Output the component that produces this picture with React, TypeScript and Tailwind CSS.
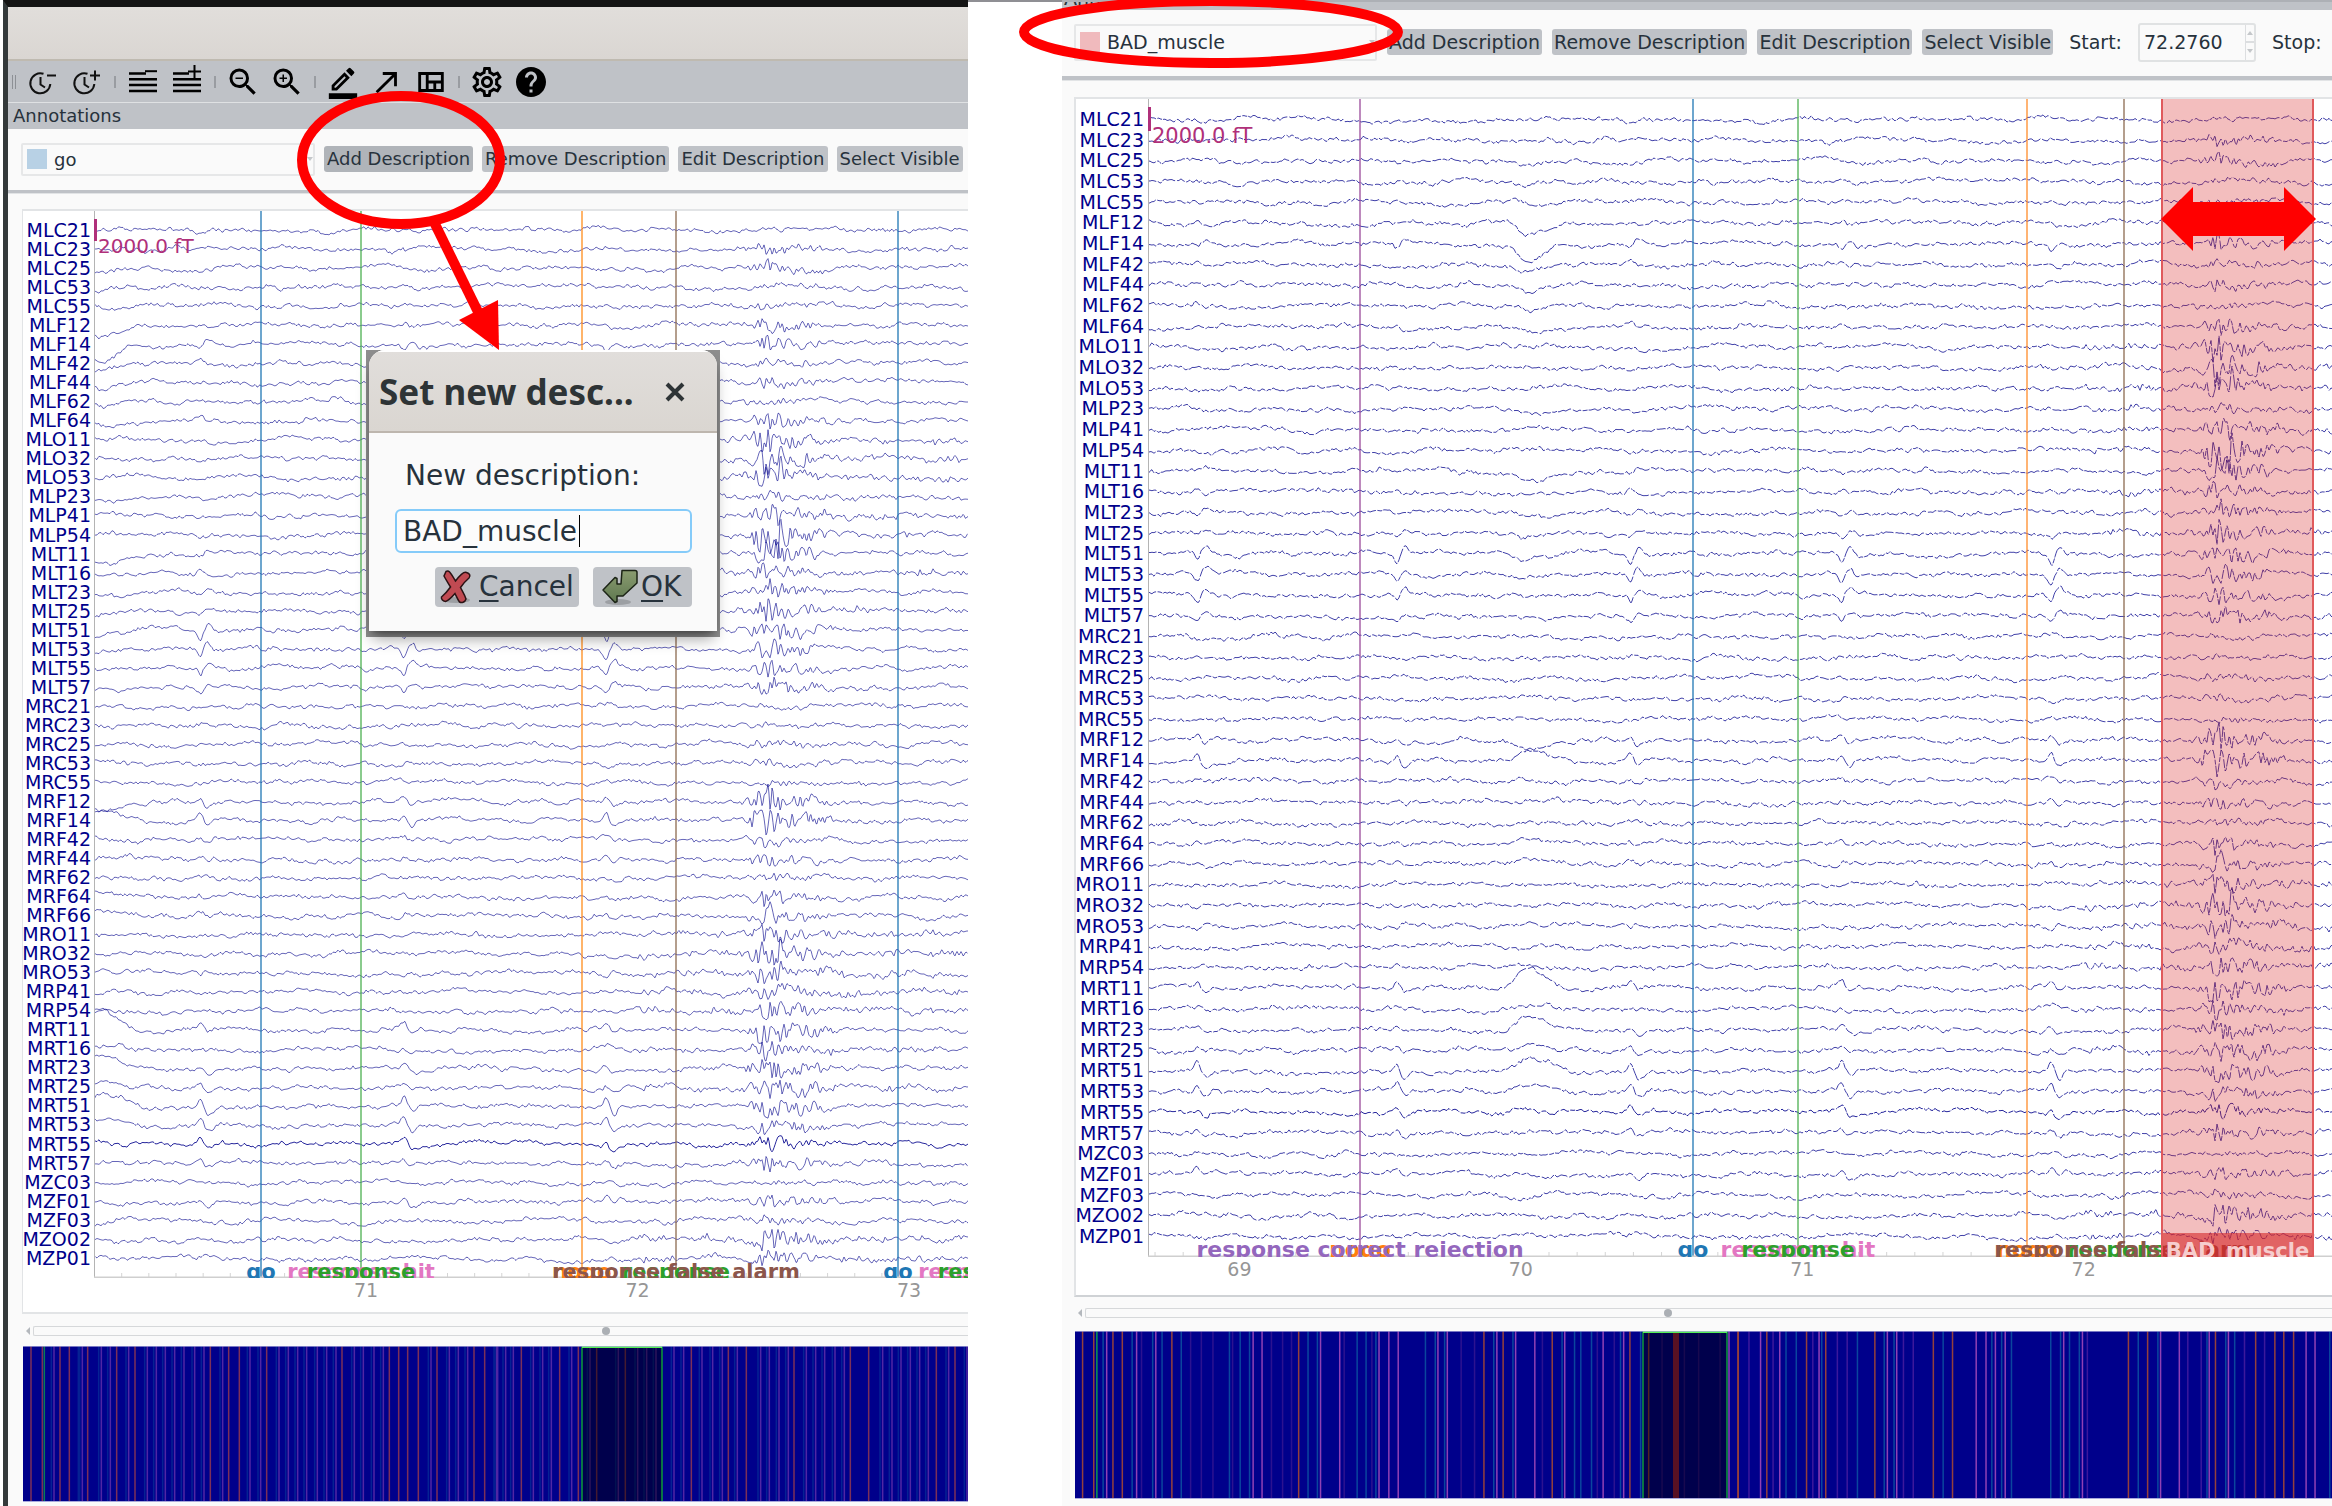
import React, { useMemo } from 'react';
import {
  MdZoomOut,
  MdZoomIn,
  MdOutlineBorderColor,
  MdCallMade,
  MdOutlineViewQuilt,
  MdOutlineSettings,
  MdHelp,
} from 'react-icons/md';

interface Channel {
  name: string;
  burst: number; // muscle artifact amplitude
  blink: number; // eye blink deflection
  beat: number; // heart beat deflection
  dark?: boolean;
}

const ch = (name: string, burst: number, blink = 0, beat = 0, dark = false): Channel => ({
  name,
  burst,
  blink,
  beat,
  dark,
});

const CHANNELS: Channel[] = [
  ch('MLC21', 1, 3), ch('MLC23', 5, 3), ch('MLC25', 5, 4), ch('MLC53', 2, 3), ch('MLC55', 3, 2),
  ch('MLF12', 7, 13, -2), ch('MLF14', 6, 17, 4), ch('MLF42', 3, 6, -2), ch('MLF44', 5, 8, -1),
  ch('MLF62', 3, 5, -1), ch('MLF64', 7, 5, -2), ch('MLO11', 10), ch('MLO32', 11), ch('MLO53', 9),
  ch('MLP23', 3, 3), ch('MLP41', 9), ch('MLP54', 13), ch('MLT11', 9, 10, 2), ch('MLT16', 8, 2, -3),
  ch('MLT23', 8, 5, 3), ch('MLT25', 9, 2, 3), ch('MLT51', 9, 4, 9), ch('MLT53', 7, 2, 8),
  ch('MLT55', 7, 1, 7), ch('MLT57', 9, 1, 5), ch('MRC21', 2, 1), ch('MRC23', 2), ch('MRC25', 4),
  ch('MRC53', 2), ch('MRC55', 2), ch('MRF12', 11, 6, -5), ch('MRF14', 14, -8, -7),
  ch('MRF42', 4, 0, -2), ch('MRF44', 6, -2, -3), ch('MRF62', 4, 0), ch('MRF64', 7, -4, -2),
  ch('MRF66', 8, -4, -2), ch('MRO11', 8), ch('MRO32', 12), ch('MRO53', 10, 0, 3), ch('MRP41', 6),
  ch('MRP54', 8, -3), ch('MRT11', 12, -21, -5), ch('MRT16', 8, -4, -2), ch('MRT23', 11, -14, -4),
  ch('MRT25', 9, -6, -4), ch('MRT51', 9, -12, -9), ch('MRT53', 8, -7, -7),
  ch('MRT55', 6, -3, -5, true), ch('MRT57', 8, -2, -4), ch('MZC03', 2), ch('MZF01', 9, 1, -4),
  ch('MZF03', 5, 2), ch('MZO02', 9), ch('MZP01', 7),
];

const BEATS = [68.85, 69.56, 70.39, 71.14, 71.885];

function hash(n: number, seed: number) {
  let h = Math.imul(n ^ (seed * 2654435761), 1597334677);
  h ^= h >>> 15;
  h = Math.imul(h, 2246822519);
  h ^= h >>> 13;
  return ((h >>> 0) / 4294967295) * 2 - 1;
}

function noise(x: number, seed: number) {
  const i = Math.floor(x);
  const f = x - i;
  return hash(i, seed) * (1 - f) + hash(i + 1, seed) * f;
}

const gauss = (t: number, mean: number, sd: number) => Math.exp(-((t - mean) ** 2) / (2 * sd * sd));

// Deflection in pixels (downwards) of one channel at time t
function signal(c: Channel, index: number, t: number) {
  let y =
    2.4 * noise(t * 10, index * 7 + 1) +
    2 * noise(t * 32, index * 7 + 2) +
    1.8 * noise(t * 125, index * 7 + 3);
  if (t > 72 && /O|P|T16|T25/.test(c.name)) y += 2.2 * noise(t * 125, index * 7 + 5);
  y += c.burst * 1.4 * noise(t * 135, index * 7 + 4) * (gauss(t, 72.48, 0.045) + 0.5 * gauss(t, 72.61, 0.07));
  if (/O32|O53|P54/.test(c.name)) y += c.burst * 1.3 * (gauss(t, 72.515, 0.005) - gauss(t, 72.526, 0.005));
  const blinkWidth = t < 70.02 ? 0.03 : 0.065;
  y += c.blink * gauss(t, 70.02, blinkWidth);
  BEATS.forEach((b) => {
    y += c.beat * (gauss(t, b, 0.009) - 0.8 * gauss(t, b + 0.03, 0.012));
  });
  return y;
}

interface EventMark {
  x: number;
  color: string;
}

interface EventLabel {
  x: number;
  text: string;
  className: string;
}

interface PlotProps {
  width: number;
  height: number;
  t0: number;
  pxPerSec: number;
  seconds: number[];
  marks: EventMark[];
  dashed?: boolean;
}

const Traces: React.FC<PlotProps> = ({ width, height, t0, pxPerSec, marks, dashed, seconds }) => {
  const paths = useMemo(() => {
    const pitch = height / (CHANNELS.length + 1);
    return CHANNELS.map((c, i) => {
      let d = '';
      for (let x = 0; x <= width; x += 1) {
        const y = pitch * (i + 1) + signal(c, i, t0 + x / pxPerSec);
        d += `${x === 0 ? 'M' : 'L'}${x} ${y.toFixed(1)}`;
      }
      return d;
    });
  }, [width, height, t0, pxPerSec]);

  const minor: number[] = [];
  for (let s = seconds[0] - 1; s < seconds[seconds.length - 1] + 1; s += 0.1) {
    minor.push((s - t0) * pxPerSec);
  }

  return (
    <svg
      className="block h-full w-full"
      viewBox={`0 0 ${width} ${height}`}
      preserveAspectRatio="none"
      fill="none"
    >
      {paths.map((d, i) => (
        <path
          key={CHANNELS[i].name}
          d={d}
          stroke="#00008b"
          strokeWidth="1"
          strokeOpacity={CHANNELS[i].dark ? 0.85 : dashed ? 0.75 : 0.6}
          strokeDasharray={dashed ? '9 1.5 5 1 14 2' : undefined}
        />
      ))}
      {marks.map((m) => (
        <line key={m.x} x1={m.x} x2={m.x} y1="0" y2={height} stroke={m.color} strokeWidth="2" strokeOpacity="0.65" />
      ))}
      {minor.map((x) => (
        <line key={x} x1={x} x2={x} y1={height - 5} y2={height} stroke="#d4d4d4" />
      ))}
      <line x1="0.5" x2="0.5" y1="0" y2={height} stroke="#b4b4b4" />
      <line x1="0" x2={width} y1={height - 0.5} y2={height - 0.5} stroke="#cfcfcf" strokeWidth="2" />
    </svg>
  );
};

const EventLabels: React.FC<{ labels: EventLabel[]; width: number; size: string }> = ({ labels, width, size }) => (
  <>
    {labels.map((l, i) => (
      <span
        key={i}
        className={`absolute -bottom-1.5 -translate-x-1/2 font-bold whitespace-nowrap ${size} ${l.className}`}
        style={{ left: `${(l.x / width) * 100}%` }}
      >
        {l.text}
      </span>
    ))}
  </>
);

const TickLabels: React.FC<{ seconds: number[]; t0: number; pxPerSec: number; width: number }> = ({
  seconds,
  t0,
  pxPerSec,
  width,
}) => (
  <>
    {seconds.map((s) => (
      <span
        key={s}
        className="absolute top-0 -translate-x-1/2 text-[19px] leading-6 text-[#969696]"
        style={{ left: `${(((s - t0) * pxPerSec) / width) * 100}%` }}
      >
        {s}
      </span>
    ))}
  </>
);

const ChannelLabels: React.FC = () => (
  <>
    {CHANNELS.map((c) => (
      <li key={c.name} className="flex min-h-0 flex-1 items-center justify-end leading-none">
        {c.name}
      </li>
    ))}
  </>
);

type Stripe = [number, string];
const mapStripes = (xs: number[], color: string, toX: (x: number) => number): Stripe[] =>
  xs.map((x) => [toX(x), color]);

const leftA = (x: number) => x / 3 - 3;
const leftB = (x: number) => x / 3 + 467;
const PURPLE_A = [102, 187, 244, 271, 326, 382, 409, 436, 464, 492, 524, 552, 608, 690, 722, 777, 805, 833, 860, 892, 920, 948, 1003, 1030, 1062, 1090, 1233, 1288, 1315, 1343, 1433];
const PURPLE_B = [20, 47, 70, 130, 158, 184, 245, 300, 385, 443, 470, 498, 552, 581, 636, 668, 697, 742, 812, 838, 867, 895, 949, 977, 1004, 1035, 1063, 1178, 1206, 1233, 1261, 1289, 1315, 1376, 1431];
const LEFT_STRIPES: Stripe[] = [
  ...mapStripes(PURPLE_A, '#052294', (x) => leftA(x - 8)),
  ...mapStripes(PURPLE_B, '#052294', (x) => leftB(x - 8)),
  ...mapStripes([175], '#052294', leftA),
  ...mapStripes(PURPLE_A, '#5026a4', leftA),
  ...mapStripes(PURPLE_B, '#5026a4', leftB),
  ...mapStripes([33, 67, 120, 148, 203, 290, 345, 571, 626, 658, 740, 966, 1108, 1136, 1163, 1195, 1251, 1362, 1394], '#7c3058', leftA),
  ...mapStripes([94, 209, 265, 320, 406, 604, 715, 769, 912, 1081, 1136, 1339, 1395], '#7c3058', leftB),
  ...mapStripes([73], '#0a7a58', leftA),
];

const rightA = (x: number) => (x - 35) / 2.24;
const rightB = (x: number) => x / 2.24 + 557;
const RIGHT_STRIPES: Stripe[] = [
  ...mapStripes([184, 294, 318, 344, 388, 475, 500, 520, 638, 700, 900, 930, 1082, 1205, 1243, 1350, 1400, 1432, 1480], '#2c1290', rightA),
  ...mapStripes([262, 316, 405, 460, 482, 608, 630, 1020, 1245, 1275, 1372, 1417], '#3c189c', rightB),
  ...mapStripes([98, 163, 209, 230, 273, 381, 405, 426, 557, 578, 667, 687, 709, 820, 842, 863, 973, 1016, 1126, 1154, 1168, 1192, 1257, 1302], '#0a469e', rightA),
  ...mapStripes([345, 368, 425, 505, 565, 587, 697, 806, 828, 850, 938, 960, 980, 1002, 1134, 1178, 1288, 1330, 1350, 1563], '#0a469e', rightB),
  ...mapStripes([106, 173, 216, 434, 454, 585, 628, 716, 738, 759, 848, 869, 980, 1022, 1065, 1132, 1218, 1264, 1500], '#9040b4', rightA),
  ...mapStripes([288, 331, 419, 572, 593, 771, 793, 814, 836, 967, 1009, 1184, 1226, 1293, 1336, 1510, 1530], '#9040b4', rightB),
  ...mapStripes([52, 77, 120, 141, 252, 536, 951, 994, 1104, 1278, 1320, 1520], '#94403c', rightA),
  ...mapStripes([238, 302, 391, 434, 544, 675, 718, 1112, 1155, 1307, 1397, 1440, 1460, 1482], '#94403c', rightB),
  ...mapStripes([84], '#0a9a50', rightA),
];

interface OverviewProps {
  width: number;
  height: number;
  stripes: Stripe[];
  view: [number, number];
  bad?: [number, number];
}

const Overview: React.FC<OverviewProps> = ({ width, height, stripes, view, bad }) => (
  <svg
    className="block h-full w-full"
    viewBox={`0 0 ${width} ${height}`}
    preserveAspectRatio="none"
  >
    <rect width={width} height={height} fill="#00008b" />
    {stripes.map(([x, color], i) => (
      <rect key={i} x={x - 0.75} y="0" width="1.5" height={height} fill={color} />
    ))}
    {bad && <rect x={bad[0]} y="0" width={bad[1] - bad[0]} height={height} fill="#a02040" />}
    <rect x={view[0]} y="0" width={view[1] - view[0]} height={height} fill="#000" fillOpacity="0.45" />
    <path d={`M${view[0]} ${height}V1H${view[1]}V${height}`} fill="none" stroke="#0c9a3a" strokeWidth="1.5" />
    <path d={`M${view[0]} 1H${view[1]}`} stroke="#55f055" strokeWidth="2" />
    <rect x="0" y="0" width={width} height="1" fill="#a8a8dc" fillOpacity="0.7" />
    <rect x="0" y={height - 1} width={width} height="1" fill="#a8a8dc" />
  </svg>
);

const ToolButton: React.FC<{ label: string; children: React.ReactNode }> = ({ label, children }) => (
  <button type="button" aria-label={label} className="flex size-9 shrink-0 items-center justify-center text-black">
    {children}
  </button>
);

const ClockIcon: React.FC<{ plus?: boolean }> = ({ plus }) => (
  <svg className="size-9" viewBox="0 0 36 36" fill="none" stroke="#111" strokeWidth="2">
    <path d="M18.5 9.8A10 10 0 1 0 25.3 20" />
    <path d="M15.5 13v7.5l4.5 3" />
    <path d={plus ? 'M21 11.5h10M26 6.5v10' : 'M22 11.5h9'} />
  </svg>
);

const LinesIcon: React.FC<{ plus?: boolean }> = ({ plus }) => (
  <svg className="size-9" viewBox="0 0 36 36" fill="none" stroke="#000" strokeWidth="2.6">
    <path d={plus ? 'M4 9.5h16M4 15.2h28M4 21h28M4 27h28' : 'M4 9.5h17M4 15.2h28M4 21h28M4 27h28'} />
    <path d={plus ? 'M19 7.5h13M25.5 1v13' : 'M20 7.2h12'} strokeWidth="2" />
  </svg>
);

const Separator: React.FC = () => <span className="h-3 w-0.5 shrink-0 bg-[#999ca1]" />;

const Toolbar: React.FC = () => (
  <div className="flex h-[42px] items-center gap-[9px] border-b border-[#dfe1e3] bg-[#bfc2c7] pl-1">
    <span className="h-3.5 w-1 border-x border-[#8d9095]" />
    <div className="flex gap-2">
      <ToolButton label="Less time"><ClockIcon /></ToolButton>
      <ToolButton label="More time"><ClockIcon plus /></ToolButton>
    </div>
    <Separator />
    <div className="flex gap-2">
      <ToolButton label="Fewer channels"><LinesIcon /></ToolButton>
      <ToolButton label="More channels"><LinesIcon plus /></ToolButton>
    </div>
    <Separator />
    <div className="flex gap-2">
      <ToolButton label="Zoom out"><MdZoomOut size={36} /></ToolButton>
      <ToolButton label="Zoom in"><MdZoomIn size={36} /></ToolButton>
    </div>
    <Separator />
    <div className="flex gap-2">
      <ToolButton label="Annotations"><MdOutlineBorderColor size={34} /></ToolButton>
      <ToolButton label="Projectors"><MdCallMade size={34} /></ToolButton>
      <ToolButton label="Overview"><MdOutlineViewQuilt size={34} /></ToolButton>
    </div>
    <Separator />
    <div className="flex gap-2">
      <ToolButton label="Settings"><MdOutlineSettings size={36} /></ToolButton>
      <ToolButton label="Help"><MdHelp size={36} /></ToolButton>
    </div>
  </div>
);

const DescriptionSelect: React.FC<{ value: string; className: string; swatch: string }> = ({
  value,
  className,
  swatch,
}) => (
  <div className={`flex shrink-0 items-center rounded-xs border-2 border-[#e6e7e8] pl-1 ${className}`}>
    <span className={`size-5 shrink-0 ${swatch}`} />
    <select
      aria-label="Description"
      defaultValue={value}
      className="h-full min-w-0 flex-1 appearance-none bg-transparent pl-[7px]"
    >
      <option>{value}</option>
    </select>
    <svg className="h-1 w-1.5" viewBox="0 0 6 4" fill="#c4c7ca"><path d="M0 0h6L3 4z" /></svg>
  </div>
);

const PushButton: React.FC<{ className?: string; children: React.ReactNode }> = ({
  className = 'bg-[#bfc2c7] px-0.5',
  children,
}) => (
  <button type="button" className={`h-[26px] shrink-0 rounded-[3px] leading-none whitespace-nowrap ${className}`}>
    {children}
  </button>
);

const TimeScroll: React.FC<{ max: number; value: number }> = ({ max, value }) => (
  <div className="flex h-2.5 items-center gap-[3px] pl-1">
    <button type="button" aria-label="Scroll back" className="shrink-0">
      <svg className="h-2 w-1" viewBox="0 0 4 8" fill="#b4b8bd"><path d="M4 0v8L0 4z" /></svg>
    </button>
    <input
      type="range"
      aria-label="Time"
      min={0}
      max={max}
      defaultValue={value}
      className="m-0 h-2.5 min-w-0 flex-1 appearance-none rounded-l-xs border-y border-l border-[#d6d8da] bg-[#fafafa] [&::-webkit-slider-thumb]:size-2 [&::-webkit-slider-thumb]:appearance-none [&::-webkit-slider-thumb]:rounded-full [&::-webkit-slider-thumb]:bg-[#abafb4]"
    />
  </div>
);

const DescriptionDialog: React.FC = () => (
  <div role="dialog" aria-label="Set new description" className="absolute top-[343px] left-[358px] w-[354px] bg-[#8e8e8e] px-[3px] pb-1.5">
    <div className="overflow-hidden rounded-t-2xl bg-[#fafafa] shadow-lg shadow-black/40">
      <div className="flex h-[83px] items-center justify-between border-t-2 border-b-2 border-t-white border-b-[#bdb6ae] bg-linear-to-b from-[#e1dedb] to-[#dad6d1] pr-8 pl-2.5 text-[#2e3436]">
        <h2 className="font-['Noto_Sans',sans-serif] text-[35px] leading-10 font-bold whitespace-nowrap">
          Set new desc...
        </h2>
        <button type="button" aria-label="Close">
          <svg className="size-5" viewBox="0 0 20 20" stroke="#2e3436" strokeWidth="4">
            <path d="M2 2l16 16M18 2L2 18" />
          </svg>
        </button>
      </div>
      <div className="pt-[25px] pr-[25px] pb-6 pl-[26px] text-[28px] leading-9">
        <label htmlFor="new-description" className="block pl-2.5">New description:</label>
        <div className="relative mt-[15px]">
          <input
            id="new-description"
            type="text"
            defaultValue="BAD_muscle"
            className="h-11 w-full rounded-md border-2 border-[#85cbf9] bg-[#fcfcfc] px-1.5 outline-none"
          />
          <span className="absolute top-1.5 left-[184px] h-8 w-px bg-black" />
        </div>
        <div className="mt-3.5 flex justify-end gap-3.5">
          <button type="button" className="flex h-10 w-36 items-center gap-1 rounded-[4px] bg-[#bfc2c7] pl-1">
            <svg className="size-9" viewBox="0 0 36 36">
              <ellipse cx="17" cy="31" rx="14" ry="3" fill="#000" fillOpacity="0.18" />
              <path
                d="M7 2.5c3-1.5 4 .5 9.500 9.500C21 6 25 2 27.500 3.500c3 1 4.500 3 2.500 5.500-3 2.500-6 6-8.500 9.500 2 4 4.500 7.500 5.500 11.500-1 3.500-4.500 4-6.500 3-1.500-2-3-5.500-4.500-8.500-3.500 4-6 7-9.500 8-3-.5-4.500-2.500-4-4.500 3-2.500 6.500-6.500 9-10C8.500 13 6.500 10 5 7z"
                fill="#c04a52"
                stroke="#2a1214"
                strokeWidth="1.500"
              />
            </svg>
            <span><span className="underline underline-offset-4">C</span>ancel</span>
          </button>
          <button type="button" className="flex h-10 w-[99px] items-center gap-0.5 rounded-[4px] bg-[#bfc2c7] pl-2">
            <svg className="size-[38px]" viewBox="0 0 38 38">
              <defs>
                <linearGradient id="ok-green" x1="0" y1="0" x2="0" y2="1">
                  <stop offset="0" stopColor="#8a9c70" />
                  <stop offset="1" stopColor="#5f7850" />
                </linearGradient>
              </defs>
              <ellipse cx="17" cy="34" rx="13" ry="3" fill="#000" fillOpacity="0.18" />
              <path
                d="M21 2.500h13q2 0 2 2V15L22 28h-6v5.500l-2 1L2 22l12-12.500 2 1V16h4z"
                fill="url(#ok-green)"
                stroke="#1c2416"
                strokeWidth="1.500"
                strokeLinejoin="round"
              />
            </svg>
            <span><span className="underline underline-offset-4">O</span>K</span>
          </button>
        </div>
      </div>
    </div>
  </div>
);

const LEFT_LABELS: EventLabel[] = [
  { x: 167, text: 'go', className: 'text-[#1f77b4]' },
  { x: 267, text: 'response hit', className: 'text-[#e377c2]' },
  { x: 267, text: 'response', className: 'text-[#2ca02c]' },
  { x: 582, text: 'response', className: 'text-[#2ca02c]' },
  { x: 488, text: 'nogo', className: 'text-[#ff7f0e]' },
  { x: 582, text: 'response false alarm', className: 'text-[#8c564b]' },
  { x: 804, text: 'go', className: 'text-[#1f77b4]' },
  { x: 898, text: 'response hit', className: 'text-[#e377c2]' },
  { x: 898, text: 'response', className: 'text-[#2ca02c]' },
];

const RIGHT_LABELS: EventLabel[] = [
  { x: 212, text: 'nogo', className: 'text-[#ff7f0e]' },
  { x: 212, text: 'response correct rejection', className: 'text-[#9467bd]' },
  { x: 545, text: 'go', className: 'text-[#1f77b4]' },
  { x: 650, text: 'response hit', className: 'text-[#e377c2]' },
  { x: 650, text: 'response', className: 'text-[#2ca02c]' },
  { x: 976, text: 'response', className: 'text-[#2ca02c]' },
  { x: 879, text: 'nogo', className: 'text-[#ff7f0e]' },
  { x: 976, text: 'response false alarm', className: 'text-[#8c564b]' },
];

const LeftPane: React.FC = () => (
  <section className="relative min-w-0 border-t-[7px] border-l-[5px] border-t-[#141414] border-l-[#343a3b] bg-[#fafafa]">
    <div className="h-[54px] border-b-2 border-b-[#bfbab0] bg-linear-to-b from-[#e1dedb] to-[#dad6d2]" />
    <Toolbar />
    <h2 className="h-[26px] bg-[#bfc2c7] pl-[5px] text-[18px] leading-[26px]">Annotations</h2>
    <div className="flex h-[60px] items-center gap-[9px] overflow-hidden pl-[13px] text-[18px]">
      <DescriptionSelect value="go" className="h-[33px] w-[294px]" swatch="bg-[#b8d1e5]" />
      <PushButton className="bg-[#b0b4b9] px-[3px]">Add Description</PushButton>
      <PushButton className="bg-[#bfc2c7] px-[3px]">Remove Description</PushButton>
      <PushButton className="bg-[#bfc2c7] px-[3px]">Edit Description</PushButton>
      <PushButton className="bg-[#bfc2c7] px-[3px]">Select Visible</PushButton>
    </div>
    <div className="mt-px h-1 border-b border-[#e2e4e6] bg-[#bfc2c7]" />
    <div className="pt-[15px] pl-3.5">
      <div className="border-y-2 border-l border-[#e2e4e6] bg-white">
        <div className="flex h-[1067px]">
          <ul className="flex w-[71px] shrink-0 flex-col py-[10px] pr-[3px] text-[19px] text-[#00008b]">
            <ChannelLabels />
          </ul>
          <div className="relative min-w-0 flex-1 overflow-hidden">
            <Traces
              width={874}
              height={1067}
              t0={69.998}
              pxPerSec={271.5}
              seconds={[71, 72, 73]}
              marks={[
                { x: 167, color: '#1f77b4' },
                { x: 267, color: '#4caf50' },
                { x: 488, color: '#ff8c1a' },
                { x: 582, color: '#8c6a50' },
                { x: 804, color: '#1f77b4' },
              ]}
            />
            <span className="absolute top-2 left-0 h-[22px] w-[3px] bg-[#b0307a]" />
            <span className="absolute top-[23px] left-1 text-[20px] leading-6 text-[#b0307a]">2000.0 fT</span>
            <EventLabels labels={LEFT_LABELS} width={874} size="text-[21px] leading-6" />
          </div>
        </div>
        <div className="relative ml-[71px] h-[34px]">
          <TickLabels seconds={[71, 72, 73]} t0={69.998} pxPerSec={271.5} width={874} />
        </div>
      </div>
      <div className="pt-3">
        <TimeScroll max={934} value={573} />
      </div>
      <div className="mt-2.5 mb-1 h-[156px] pl-px">
        <Overview width={945} height={156} stripes={LEFT_STRIPES} view={[559, 639]} />
      </div>
    </div>
    <DescriptionDialog />
    <svg className="pointer-events-none absolute -top-[7px] -left-[8px] h-full w-full overflow-visible" fill="none">
      <ellipse cx="401" cy="160" rx="99" ry="64" stroke="#f00" strokeWidth="10" />
      <path d="M435 224L482 320" stroke="#f00" strokeWidth="10" />
      <path d="M499 350L459 320L498 300z" fill="#f00" />
    </svg>
  </section>
);

const RightPane: React.FC = () => (
  <section className="relative min-w-0 bg-[#fafafa]">
    <h2 className="flex h-2.5 items-end overflow-hidden border-t-2 border-[#adb0b5] bg-[#bfc2c7] pl-0.5 text-[19px] leading-6">
      Annotations
    </h2>
    <div className="flex h-16 items-center gap-2.5 overflow-hidden pl-3 text-[19px] whitespace-nowrap">
      <DescriptionSelect value="BAD_muscle" className="h-[37px] w-[303px]" swatch="bg-[#f0babd]" />
      <PushButton>Add Description</PushButton>
      <PushButton>Remove Description</PushButton>
      <PushButton>Edit Description</PushButton>
      <PushButton>Select Visible</PushButton>
      <label htmlFor="start" className="shrink-0 pl-1.5">Start:</label>
      <div className="ml-1.5 flex h-[39px] w-[118px] shrink-0 rounded-[3px] border-2 border-[#e0e2e3]">
        <input id="start" type="text" defaultValue="72.2760" className="min-w-0 flex-1 pl-1 outline-none" />
        <div className="flex w-[9px] flex-col border-l border-[#dcdee0]">
          <button type="button" aria-label="Increase" className="flex flex-1 items-center justify-center border-b-2 border-[#dcdee0]">
            <svg className="h-1 w-1.5" viewBox="0 0 6 4" fill="#c4c7ca"><path d="M0 4h6L3 0z" /></svg>
          </button>
          <button type="button" aria-label="Decrease" className="flex flex-1 items-center justify-center">
            <svg className="h-1 w-1.5" viewBox="0 0 6 4" fill="#c4c7ca"><path d="M0 0h6L3 4z" /></svg>
          </button>
        </div>
      </div>
      <span className="shrink-0 pl-1.5">Stop:</span>
    </div>
    <div className="mt-0.5 h-[5px] border-b border-[#e2e4e6] bg-[#bfc2c7]" />
    <div className="pt-4 pl-3">
      <div className="border-y-2 border-l-2 border-[#e2e4e6] border-b-[#cfd2d5] bg-white">
        <div className="flex h-[1158px]">
          <ul className="flex w-[72px] shrink-0 flex-col py-[10px] pr-1 text-[19px] text-[#00008b]">
            <ChannelLabels />
          </ul>
          <div className="relative min-w-0 flex-1 overflow-hidden">
            <Traces
              width={1184}
              height={1158}
              t0={68.675}
              pxPerSec={281.4}
              seconds={[69, 70, 71, 72]}
              dashed
              marks={[
                { x: 212, color: '#9a4a9a' },
                { x: 545, color: '#1f77b4' },
                { x: 650, color: '#4caf50' },
                { x: 879, color: '#ff8c2a' },
                { x: 976, color: '#8c6a50' },
              ]}
            />
            <span className="absolute top-2 left-0 h-6 w-[3px] bg-[#b0307a]" />
            <span className="absolute top-[25px] left-1 text-[21px] leading-6 text-[#b0307a]">2000.0 fT</span>
            <EventLabels labels={RIGHT_LABELS} width={1184} size="text-[22px] leading-[26px]" />
            <div
              className="absolute inset-y-0 flex items-end overflow-hidden border-x-2 border-[#e05a5c] bg-[#d62728]/30"
              style={{ left: `${(1013 / 1184) * 100}%`, width: `${(153 / 1184) * 100}%` }}
            >
              <div className="relative h-6 w-full overflow-hidden bg-[#d62728]/60">
                <span className="absolute -bottom-1.5 left-1/2 -translate-x-1/2 text-[21px] leading-6 font-bold text-[#f6cdce]">
                  BAD_muscle
                </span>
              </div>
            </div>
            <svg
              className="pointer-events-none absolute top-[88px] h-16"
              viewBox="0 0 155 64"
              preserveAspectRatio="none"
              style={{ left: `${(1013 / 1184) * 100}%`, width: `${(155 / 1184) * 100}%` }}
            >
              <path d="M0 32L32 0v15h91V0l32 32-32 32V49H32v15z" fill="#f00" />
            </svg>
          </div>
        </div>
        <div className="relative ml-[72px] h-[38px]">
          <TickLabels seconds={[69, 70, 71, 72]} t0={68.675} pxPerSec={281.4} width={1184} />
        </div>
      </div>
      <div className="pt-[11px]">
        <TimeScroll max={1245} value={581} />
      </div>
      <div className="mt-[13px] mb-2 h-[168px] pl-px">
        <Overview width={1257} height={168} stripes={RIGHT_STRIPES} view={[568, 652]} bad={[598, 604]} />
      </div>
    </div>
    <svg className="pointer-events-none absolute top-0 left-0 h-full w-full overflow-visible" fill="none">
      <ellipse cx="149" cy="32" rx="187" ry="31" stroke="#f00" strokeWidth="10" />
    </svg>
  </section>
);

export default function App() {
  return (
    <main className="grid min-h-screen grid-cols-[965fr_94fr_1270fr] overflow-hidden bg-white pl-[3px] font-['DejaVu_Sans',sans-serif] text-[#27323c]">
      <LeftPane />
      <div className="h-0.5 bg-[#8f8f94]" />
      <RightPane />
    </main>
  );
}
